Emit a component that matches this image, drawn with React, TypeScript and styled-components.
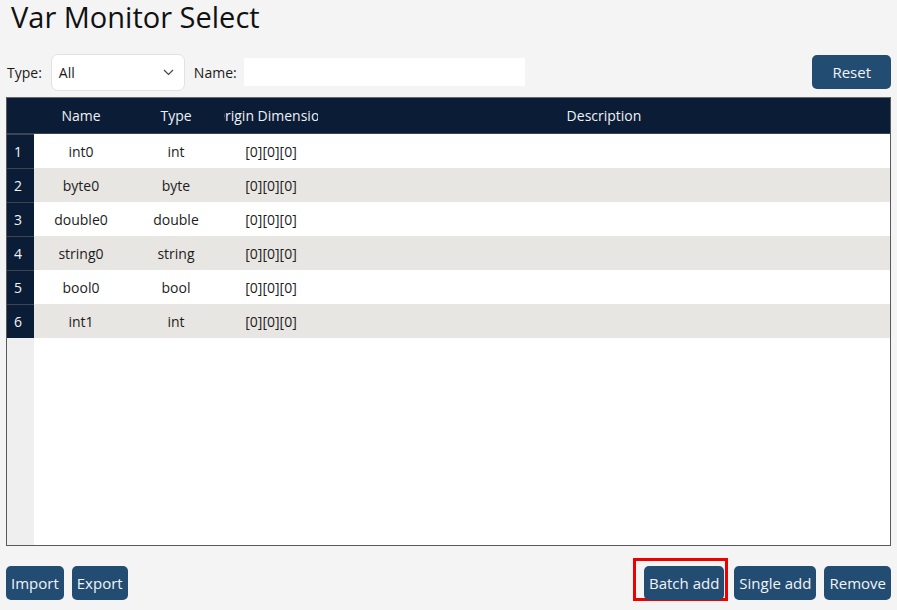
import React from "react";
import styled, { createGlobalStyle } from "styled-components";

const GlobalStyle = createGlobalStyle`
  html, body {
    margin: 0;
    padding: 0;
    background: #f4f4f4;
  }
  body {
    font-family: "Open Sans", "Noto Sans", sans-serif;
    color: #1a1a1a;
  }
  * { box-sizing: border-box; }
`;

const Page = styled.div`
  width: 897px;
  height: 610px;
  display: flex;
  flex-direction: column;
  padding: 0 6px 0 6px;
`;

const Title = styled.h1`
  margin: 0;
  padding: 0 0 0 5px;
  font-size: 29px;
  font-weight: 400;
  line-height: 33px;
  color: #111;
`;

const Toolbar = styled.div`
  display: flex;
  align-items: center;
  height: 38px;
  margin-top: 20px;
`;

const Label = styled.span`
  font-size: 14px;
  margin: 0 9px 0 1px;
`;

const Select = styled.div`
  width: 134px;
  height: 37px;
  background: #fff;
  border: 1px solid #e2e2e2;
  border-radius: 7px;
  display: flex;
  align-items: center;
  justify-content: space-between;
  padding: 0 10px 0 7px;
  font-size: 14px;
  margin-right: 8px;
`;

const NameInput = styled.div`
  width: 281px;
  height: 28px;
  background: #fff;
  margin-left: -2px;
`;

const Spacer = styled.div`
  flex: 1;
`;

const Button = styled.button<{ $px?: number }>`
  height: 34px;
  padding: 0 ${(p) => p.$px ?? 5}px;
  background: #224c71;
  color: #f2f4f7;
  border: none;
  border-radius: 5px;
  font-family: "Open Sans", "Noto Sans", sans-serif;
  font-size: 15px;
  cursor: pointer;
`;

const Table = styled.div`
  margin-top: 6px;
  height: 449px;
  border: 1px solid #5a5a5a;
  border-top: none;
  display: grid;
  grid-template-columns: 27px 94px 96px 94px 1fr;
  grid-template-rows: 37px repeat(6, 34px) 1fr;
  background: #fff;
`;

const HeaderCell = styled.div`
  background: #0a1c36;
  color: #eef1f5;
  font-size: 14px;
  display: flex;
  align-items: center;
  justify-content: center;
  overflow: hidden;
  white-space: nowrap;
  border-top: 1px solid #6a6a6a;
  border-bottom: 1px solid #3a4452;
`;

const RowNum = styled.div`
  background: #0a1c36;
  color: #f2f4f7;
  font-size: 14px;
  display: flex;
  align-items: center;
  padding-left: 7px;
  border-top: 1px solid #3a4452;
`;

const Cell = styled.div<{ $alt: boolean }>`
  background: ${(p) => (p.$alt ? "#e8e6e3" : "#ffffff")};
  font-size: 14px;
  display: flex;
  align-items: center;
  justify-content: center;
  white-space: nowrap;
  overflow: hidden;
  color: #1c1c1c;
`;

const EmptyGutter = styled.div`
  background: #efefef;
`;

const EmptyBody = styled.div`
  grid-column: 2 / 6;
  background: #fff;
`;

const Footer = styled.div`
  display: flex;
  align-items: center;
  gap: 8px;
  margin-top: 20px;
`;

const Highlight = styled.div`
  border: 3px solid #ee0000;
  height: 43px;
  width: 95px;
  display: flex;
  align-items: flex-end;
  justify-content: flex-end;
  padding-right: 1px;
  margin-top: -9px;
  margin-right: -2px;
  margin-bottom: -1px;
  & > button {
    margin-bottom: -2px;
  }
`;

type Row = { name: string; type: string; dim: string };

const rows: Row[] = [
  { name: "int0", type: "int", dim: "[0][0][0]" },
  { name: "byte0", type: "byte", dim: "[0][0][0]" },
  { name: "double0", type: "double", dim: "[0][0][0]" },
  { name: "string0", type: "string", dim: "[0][0][0]" },
  { name: "bool0", type: "bool", dim: "[0][0][0]" },
  { name: "int1", type: "int", dim: "[0][0][0]" },
];

const Chevron = () => (
  <svg width="11" height="7" viewBox="0 0 11 7" fill="none">
    <path d="M1 1l4.5 4.5L10 1" stroke="#444" strokeWidth="1.2" />
  </svg>
);

export default function App() {
  return (
    <>
      <GlobalStyle />
      <Page>
        <Title>Var Monitor Select</Title>
        <Toolbar>
          <Label>Type:</Label>
          <Select>
            <span>All</span>
            <Chevron />
          </Select>
          <Label>Name:</Label>
          <NameInput />
          <Spacer />
          <Button $px={20}>Reset</Button>
        </Toolbar>
        <Table>
          <HeaderCell />
          <HeaderCell>Name</HeaderCell>
          <HeaderCell>Type</HeaderCell>
          <HeaderCell>Origin Dimension</HeaderCell>
          <HeaderCell>Description</HeaderCell>
          {rows.map((r, i) => (
            <React.Fragment key={i}>
              <RowNum>{i + 1}</RowNum>
              <Cell $alt={i % 2 === 1}>{r.name}</Cell>
              <Cell $alt={i % 2 === 1}>{r.type}</Cell>
              <Cell $alt={i % 2 === 1}>{r.dim}</Cell>
              <Cell $alt={i % 2 === 1} />
            </React.Fragment>
          ))}
          <EmptyGutter />
          <EmptyBody />
        </Table>
        <Footer>
          <Button>Import</Button>
          <Button>Export</Button>
          <Spacer />
          <Highlight>
            <Button>Batch add</Button>
          </Highlight>
          <Button>Single add</Button>
          <Button>Remove</Button>
        </Footer>
      </Page>
    </>
  );
}
